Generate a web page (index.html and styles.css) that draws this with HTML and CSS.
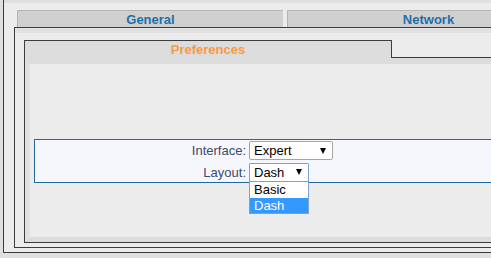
FILE: index.html
```html
<!DOCTYPE html>
<html>
<head>
    <meta charset="UTF-8">
    <title>Preferences</title>
    <link rel="stylesheet" href="styles.css">
</head>
<body>
    <div class="frame">
        <!-- Pestañas principales -->
        <div class="tabbar">
            <div class="tab tab-general">General</div>
            <div class="tab tab-network">Network</div>
        </div>

        <div class="page">
            <!-- Sub-pestaña de preferencias -->
            <div class="subtabs">
                <div class="subtab">Preferences</div>
                <div class="subtab-fill"></div>
            </div>

            <div class="panel">
                <div class="panel-inner">
                    <div class="form-box">
                        <div class="form-label">Interface:</div>
                        <div class="form-field">
                            <div class="select select-interface">
                                <span>Expert</span>
                                <span class="arrow"></span>
                            </div>
                        </div>

                        <div class="form-label">Layout:</div>
                        <div class="form-field">
                            <div class="select select-layout">
                                <span>Dash</span>
                                <span class="arrow"></span>
                                <!-- Lista desplegable abierta -->
                                <div class="options">
                                    <div class="option">Basic</div>
                                    <div class="option selected">Dash</div>
                                </div>
                            </div>
                        </div>
                    </div>
                </div>
            </div>
        </div>
    </div>
</body>
</html>
```

FILE: styles.css
```css
/* Estilos de la pagina de preferencias */
body {
    font-family: Arial, "Liberation Sans", sans-serif;
    background-color: #e0e0e0;
    margin: 0;
    padding: 0;
    overflow: hidden;
}

.frame {
    margin-left: 3px;
    width: 477px;
    height: 238px;
    overflow: hidden;
    background-color: #ececec;
    border-left: 1px solid #3c3c3c;
    border-bottom: 1px solid #3c3c3c;
    box-shadow: inset 0 3px 0 #e0e0e0;
    padding: 10px 0 4px 10px;
}

.tabbar {
    display: flex;
    gap: 4px;
    padding-left: 3px;
}

.tab {
    flex-shrink: 0;
    height: 16px;
    line-height: 17px;
    background-color: #d0d0d0;
    border-top: 1px solid #b4b4b4;
    border-left: 1px solid #b4b4b4;
    color: #1f6ea8;
    font-weight: bold;
    font-size: 13px;
    text-align: center;
}

.tab-general {
    width: 265px;
}

.tab-network {
    width: 281px;
}

.page {
    border: 1px solid #3c3c3c;
    border-right: none;
    background-color: #ececec;
    box-shadow: inset 0 5px 0 #e2e2e2;
    padding: 12px 0 4px 9px;
}

.subtabs {
    display: flex;
}

.subtab {
    width: 366px;
    height: 17px;
    line-height: 17px;
    background-color: #dcdcdc;
    border: 1px solid #3c3c3c;
    border-bottom: none;
    color: #f79a44;
    font-weight: bold;
    font-size: 13px;
    text-align: center;
}

.subtab-fill {
    flex: 1;
    height: 17px;
    border-bottom: 1px solid #3c3c3c;
}

.panel {
    border: 1px solid #3c3c3c;
    border-top: none;
    border-right: none;
}

.panel-inner {
    height: 173px;
    background-color: #ececec;
    border-top: 6px solid #dcdcdc;
    border-left: 5px solid #e0e0e0;
    border-bottom: 5px solid #dcdcdc;
    padding-left: 4px;
}

.form-box {
    margin-top: 75px;
    background-color: #f5f7fc;
    border: 1px solid #1d6a9c;
    border-right: none;
    display: grid;
    grid-template-columns: 211px 1fr;
    column-gap: 3px;
    row-gap: 2px;
    padding: 1px 0 0 0;
    height: 41px;
}

.form-label {
    text-align: right;
    color: #3c4a6e;
    font-size: 13px;
    line-height: 19px;
}

.form-field {
    display: flex;
}

.select {
    position: relative;
    box-sizing: border-box;
    height: 19px;
    display: flex;
    align-items: center;
    justify-content: space-between;
    padding: 0 6px 0 4px;
    background-color: #fff;
    border: 1px solid #a5a5a5;
    border-radius: 2px;
    font-size: 13px;
    color: #000;
}

.select-interface {
    width: 84px;
}

.select-layout {
    width: 60px;
    border-color: #7f9fcf;
    border-radius: 1px;
}

.arrow {
    width: 0;
    height: 0;
    border-left: 3px solid transparent;
    border-right: 3px solid transparent;
    border-top: 6px solid #000;
}

.options {
    position: absolute;
    left: -1px;
    top: 17px;
    width: 60px;
    box-sizing: border-box;
    background-color: #fff;
    border: 1px solid #7f9fcf;
    font-size: 13px;
}

.option {
    height: 16px;
    line-height: 16px;
    padding-left: 4px;
    color: #000;
}

.option.selected {
    height: 15px;
    line-height: 15px;
    background-color: #3399ff;
    color: #fff;
}
```
